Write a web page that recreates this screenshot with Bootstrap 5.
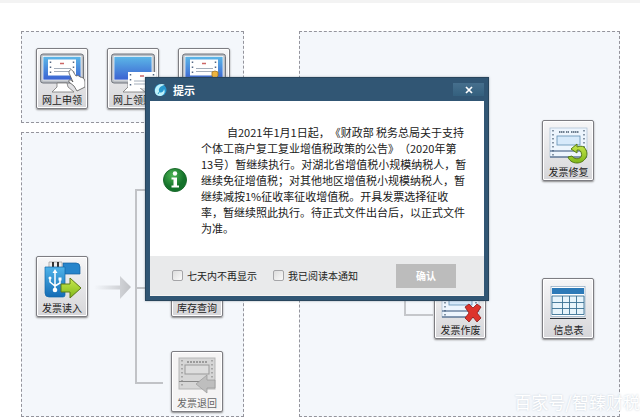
<!DOCTYPE html>
<html lang="zh-CN">
<head>
<meta charset="utf-8">
<meta name="viewport" content="width=device-width, initial-scale=1">
<title>提示</title>
<link href="https://cdn.jsdelivr.net/npm/bootstrap@5.3.0/dist/css/bootstrap.min.css" rel="stylesheet">
<style>
body{font-family:"Noto Sans CJK SC",sans-serif;font-size:10px;line-height:16px;color:#222;background:#fff;overflow:hidden;text-spacing-trim:space-all}
.stage{min-height:100vh;border-top:3px solid #f3f3f3;padding:28px 20px 0 21px}
.boards{display:grid;grid-template-columns:223fr 320fr;column-gap:55px;flex:1}
.stack{gap:9px}
.board{background:#f4f7fb;border:1px dashed #94949c}
.top-tools{padding:16px 13px 13px 14px;gap:19px}
.tile{width:52px;height:61px;padding:2px 0 0;border:1px solid #7d7d82;border-radius:2px;background:linear-gradient(#f6f6f7,#d6d6d9);box-shadow:inset 0 0 0 1px #fff,0 1px 2px #888;font-size:10px;line-height:14px;color:#222;flex:none}
.tile svg{display:block;width:46px;height:40px;margin:0 auto}
.tile.dim{background:#f5f4f4;color:#666}
.node{position:absolute}
.n-read{left:14px;top:123px}
.n-stock{left:149px;top:123px}
.n-back{left:149px;top:218px}
.n-wires{left:72px;top:55px}
.n-fix{left:242px;top:88px}
.n-void{left:134px;top:246px}
.n-info{left:242px;top:246px}
.n-wire2{left:104px;top:249px}
.notice{position:absolute;left:145px;top:74px;width:344px;background:#315674;border:1px solid #28455c;padding:0 4px 4px;box-shadow:0 0 2px #5678}
.notice-head{height:23px;padding:0 0 0 4px;gap:6px}
.notice-title{font-size:11px;line-height:16px;color:#fff}
.notice-close{width:31px;height:13px;background:linear-gradient(#466f8d,#34607e);color:#fff}
.notice-body{background:#fff;padding:23px 8px 20px 13px;gap:14px}
.notice-text{font-size:11px;line-height:16px;color:#202020;white-space:nowrap}
.notice-text .first{padding-left:26px}
.notice-foot{background:#e9eaeb;height:40px;padding:0 28px 0 22px;border-bottom:1px solid #f6f4f2}
.tick{appearance:none;width:11px;height:11px;margin:0;border:1px solid #a5a5a8;border-radius:2px;background:linear-gradient(135deg,#ddd,#fafafa);flex:none}
.tick:checked{background:#315674}
.ok-btn{width:60px;height:24px;background:#bcbcbc;color:#fff;font-size:10px}
.credit{position:absolute;right:0;bottom:3px;font-size:17px;line-height:24px;color:#fff;text-shadow:0 0 2px #c3ccd6;white-space:nowrap}
</style>
<script src="https://cdn.jsdelivr.net/npm/bootstrap@5.3.0/dist/js/bootstrap.bundle.min.js"></script>
</head>
<body>
<svg width="0" height="0" class="position-absolute" aria-hidden="true">
<defs>
<linearGradient id="sky" x2="0" y2="1"><stop stop-color="#5cb7e7"/><stop offset="1" stop-color="#3b62d2"/></linearGradient>
<linearGradient id="usb" x2="0" y2="1"><stop stop-color="#4fb3e9"/><stop offset="1" stop-color="#146cb5"/></linearGradient>
<linearGradient id="lime" x2="0" y2="1"><stop stop-color="#cbea50"/><stop offset="1" stop-color="#7fb719"/></linearGradient>
<linearGradient id="fade"><stop stop-color="#c4c6ca" stop-opacity="0"/><stop offset="1" stop-color="#bfc1c5"/></linearGradient>
<radialGradient id="leaf" cx=".4" cy=".3"><stop stop-color="#4cb553"/><stop offset="1" stop-color="#14722b"/></radialGradient>
<g id="monitor">
<rect x="1.500" y="1" width="43" height="29" rx="2.500" fill="#b9bdc3" stroke="#70757c"/>
<rect x="4" y="3.500" width="38" height="23.500" fill="url(#sky)" stroke="#fff" stroke-width=".7"/>
<path d="M18 30h10l1 4 6 5H13l5-5z" fill="#fff" stroke="#777" stroke-width=".8"/>
</g>
<g id="slip">
<rect width="28" height="16" fill="#fff"/>
<path d="M2.500 2v13M25.500 2v13" stroke="#536783" stroke-width="1.500" stroke-dasharray="1.500 3.500"/>
<path d="M12 4h4" stroke="#c66" stroke-width="1.500"/><path d="M6 9h17M6 12h17" stroke="#8d99aa" stroke-width=".8"/>
</g>
<g id="invoice">
<rect x="5" y="1" width="37" height="29" fill="#edf5fd" stroke="#a8bdd0" stroke-width=".7"/>
<path d="M8 3v26M39 3v26" stroke="#4d6279" stroke-width="1.300" stroke-dasharray="1.500 2.500"/>
<path d="M14 5h6M21 5h3M26 5h8" stroke="#46596e" stroke-width="1.500" stroke-dasharray="1.500 .5"/>
<rect x="12" y="9" width="23" height="9" fill="#d7eafb" stroke="#608eb2" stroke-width=".8"/>
<path d="M5 24h37M5 30h37" stroke="#314e77" stroke-width="1.200"/>
</g>
</defs>
</svg>

<main class="stage d-flex flex-column position-relative">
<div class="boards">
<div class="stack d-flex flex-column">
<section class="board top-tools d-flex" aria-label="网上领票">
<button class="tile" type="button"><svg viewBox="0 0 46 40"><use href="#monitor"/><use href="#slip" x="9" y="6.500"/><path d="M31 17c2-1 3 1 4 3l2 3c2-1 3 0 4 1 3 0 5 2 5 5v5l-8 4-3-5-5-4c-1-2 1-3 3-1l1 1-4-9c0-1 0-2 1-3z" fill="#fff" stroke="#555" stroke-width=".8"/></svg>网上申领</button>
<button class="tile" type="button"><svg viewBox="0 0 46 40"><use href="#monitor"/><use href="#slip" x="18" y="19"/></svg>网上领购</button>
<button class="tile" type="button" aria-label="网上领票"><svg viewBox="0 0 46 40"><use href="#monitor"/><use href="#slip" x="9" y="6.500"/><path d="M31 19q3-2 6 0v4l-3 3-3-3z" fill="#f0b53f" stroke="#9f7425" stroke-width=".8"/></svg>&nbsp;</button>
</section>
<section class="board position-relative flex-grow-1" aria-label="发票读入流程">
<svg class="node n-wires" width="70" height="200" viewBox="0 0 70 200" fill="none"><path d="M0 97.500h26V88l11 11-11 12v-9.500H0z" fill="url(#fade)"/><path d="M69 2H42v193h27M42 100h20" stroke="#c1c3c7" stroke-width="2"/></svg>
<button class="tile node n-read" type="button"><svg viewBox="0 0 46 40"><path d="M24 2h13q4 0 4 4v7H24z" fill="#2785cb" stroke="#14609d" stroke-width=".7"/><path d="M10 1h13v6H10z" fill="#eee" stroke="#999" stroke-width=".7"/><path d="M14 1v5M19 1v5" stroke="#222" stroke-width="1.800"/><path d="M6 6h20v28q0 2-2 2H10q-4 0-4-4z" fill="url(#usb)" stroke="#1369ab" stroke-width=".7"/><path d="M16 12v16M11 17v4l5 4 5-3v-4" fill="none" stroke="#fff" stroke-width="1.500"/><path d="M16 8l-2.500 4h5z" fill="#fff"/><circle cx="16" cy="29" r="2.300" fill="#fff"/><circle cx="11" cy="17" r="1.500" fill="#fff"/><path d="M19.500 16.500h3v3h-3z" fill="#fff"/><path d="M22 23h9v-6l11 10-11 10v-6h-9z" fill="url(#lime)" stroke="#5c7918"/></svg>发票读入</button>
<button class="tile node n-stock" type="button"><svg viewBox="0 0 46 40"><use href="#invoice"/></svg>库存查询</button>
<button class="tile dim node n-back" type="button"><svg viewBox="0 0 46 40"><rect x="5" y="2" width="36" height="31" fill="#d6d6d6" stroke="#b5b5b5"/><path d="M8 4v28M38 4v28" stroke="#777" stroke-dasharray="1.500 2.500"/><path d="M13 6h20" stroke="#888" stroke-width="1.500" stroke-dasharray="2 1"/><rect x="11" y="9" width="24" height="9" fill="#ddd" stroke="#999"/><path d="M5 25.500h36" stroke="#888"/><path d="M22 28l11-9v5h8v8h-8v5z" fill="#bebebe" stroke="#999" stroke-width=".7"/></svg>发票退回</button>
</section>
</div>
<section class="board position-relative" aria-label="发票管理">
<button class="tile node n-fix" type="button"><svg viewBox="0 0 46 40"><use href="#invoice" y="2"/><path d="M36 18c7 8 0 16-7 16-5 0-8-3-9-6l4-1c3 5 12 3 9-4-1-2-2-2-4-2v3l-6-4 6-5v3c3-1 5-1 7 0z" transform="translate(3 4)" fill="url(#lime)" stroke="#557a16"/></svg>发票修复</button>
<svg class="node n-wire2" width="30" height="40" viewBox="0 0 30 40" fill="none"><path d="M1 0v34h28" stroke="#c5c7cb" stroke-width="2"/></svg>
<button class="tile node n-void" type="button"><svg viewBox="0 0 46 40"><use href="#invoice" y="4"/><path d="M28 24l4-3 4 4 4-4 4 3-4 6 4 5-4 4-4-5-4 5-4-4 4-5z" fill="#dd342c" stroke="#8c1918" stroke-width=".8"/></svg>发票作废</button>
<button class="tile node n-info" type="button"><svg viewBox="0 0 46 40"><rect x="6" y="3.500" width="34" height="30" fill="#fff" stroke="#8ba7c0" stroke-width=".7"/><path d="M7 5h32v6H7z" fill="#2d7ab8"/><path d="M7 13h32v19H7z" fill="#e7f4fb"/><path d="M7 13h32v18.500H7zM7 19.500h32M7 25.500h32M17.500 13v18M24.500 13v18M31.500 13v18" fill="none" stroke="#397193" stroke-width=".9"/><path d="M5 35.500h36" stroke="#2c343d"/></svg>信息表</button>
</section>
</div>

<div class="notice" role="dialog" aria-labelledby="noticeTitle">
<header class="notice-head d-flex align-items-center">
<svg width="13" height="14" viewBox="0 0 13 14"><circle cx="6.500" cy="7" r="6" fill="#2796cf"/><path d="M1 9C0 4 6-1 11 2 8 2 4 5 5 8s5 1 5-2c2 4-1 7-4 7S1 11 1 9z" fill="#bdf0fa"/><path d="M4 11l5-8" stroke="#2d9dc6"/></svg>
<h1 class="notice-title fw-bold mb-0" id="noticeTitle">提示</h1>
<button class="notice-close border-0 p-0 ms-auto d-flex align-items-center justify-content-center" type="button" aria-label="关闭"><svg width="8" height="8" viewBox="0 0 8 8"><path d="M1 1l6 6M7 1L1 7" stroke="#fff" stroke-width="1.700"/></svg></button>
</header>
<div class="notice-body d-flex align-items-center">
<svg class="flex-shrink-0" width="24" height="24" viewBox="0 0 24 24"><circle cx="12" cy="12" r="11.500" fill="url(#leaf)" stroke="#1b6a2c"/><circle cx="12" cy="5.500" r="2.200" fill="#fff"/><path d="M8.500 9.500H14v8h2v2H8.500v-2h2v-6h-2z" fill="#fff"/></svg>
<div class="notice-text"><div class="first">自2021年1月1日起，《财政部 税务总局关于支持</div><div>个体工商户复工复业增值税政策的公告》（2020年第</div><div>13号）暂继续执行。对湖北省增值税小规模纳税人，暂</div><div>继续免征增值税；对其他地区增值税小规模纳税人，暂</div><div>继续减按1%征收率征收增值税。开具发票选择征收</div><div>率，暂继续照此执行。待正式文件出台后，以正式文件</div><div>为准。</div></div>
</div>
<footer class="notice-foot d-flex align-items-center">
<label class="d-flex align-items-center gap-1" for="hideWeek"><input class="tick" id="hideWeek" type="checkbox">七天内不再显示</label>
<label class="d-flex align-items-center gap-1 ms-3" for="haveRead"><input class="tick" id="haveRead" type="checkbox">我已阅读本通知</label>
<button class="ok-btn border-0 p-0 fw-bold ms-auto" type="button">确认</button>
</footer>
</div>
<div class="credit">百家号/智臻财税</div>
</main>
</body>
</html>
